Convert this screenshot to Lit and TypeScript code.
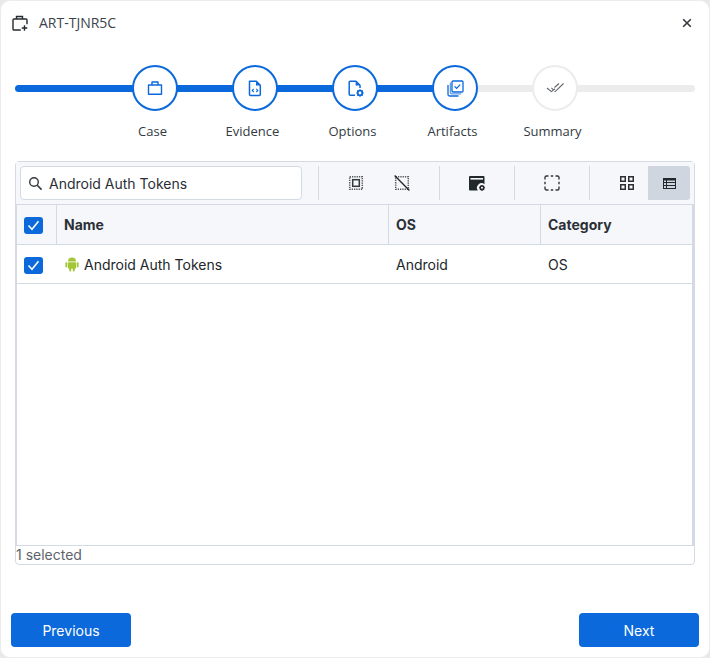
import { LitElement, html, css, svg, unsafeCSS } from 'lit';
import { customElement } from 'lit/decorators.js';

const BLUE = '#0b69dc';
const blue = unsafeCSS(BLUE);

const steps = [
  {
    label: 'Case',
    done: true,
    icon: svg`<path d="M2.5 6h13v9.3h-13z M6 6V3h6v3" fill="none" stroke="${BLUE}" stroke-width="1.4" stroke-linejoin="round"/>`,
  },
  {
    label: 'Evidence',
    done: true,
    icon: svg`<path d="M3.5 2.2h6.8l4 4V15.5a1 1 0 0 1-1 1H4.5a1 1 0 0 1-1-1z" fill="none" stroke="${BLUE}" stroke-width="1.5" stroke-linejoin="round"/><path d="M10 2.2v4.4h4.4z" fill="${BLUE}"/><path d="M7.7 9.8 6.2 11.4l1.5 1.6M10.3 9.8l1.5 1.6-1.5 1.6" fill="none" stroke="${BLUE}" stroke-width="1.1"/>`,
  },
  {
    label: 'Options',
    done: true,
    icon: svg`<path d="M9 16.2H4.2a1 1 0 0 1-1-1V3.2a1 1 0 0 1 1-1h5.8l4 4V9" fill="none" stroke="${BLUE}" stroke-width="1.5" stroke-linejoin="round"/><path d="M9.6 2.2v4.4h4.4z" fill="${BLUE}"/><circle cx="14" cy="14" r="2.3" fill="none" stroke="${BLUE}" stroke-width="1.8"/><path d="M14 10.3v1.3M14 16.4v1.3M10.3 14h1.3M16.4 14h1.3M11.4 11.4l.9.9M15.7 15.7l.9.9M16.6 11.4l-.9.9M12.3 15.7l-.9.9" stroke="${BLUE}" stroke-width="1.2"/>`,
  },
  {
    label: 'Artifacts',
    done: true,
    icon: svg`<path d="M2 6v9.5A1.5 1.5 0 0 0 3.5 17h9" fill="none" stroke="${BLUE}" stroke-width="1.3"/><path d="M4.4 3.5v10a1.3 1.3 0 0 0 1.3 1.3h9.5" fill="none" stroke="${BLUE}" stroke-width="1.3" opacity=".65"/><rect x="6" y="2" width="11" height="11" rx="1" fill="#fff" stroke="${BLUE}" stroke-width="1.3"/><path d="m8.6 7.4 2 2 3.6-3.8" fill="none" stroke="${BLUE}" stroke-width="1.3"/>`,
  },
  {
    label: 'Summary',
    done: false,
    icon: svg`<path d="m1 9 4.4 3.6L9 9.8M5.4 8.8l3.8 3.8L17.5 4.5M8.5 8.5l4.5-4" fill="none" stroke="#62676d" stroke-width="1.1"/>`,
  },
];

@customElement('app-root')
export class AppRoot extends LitElement {
  static styles = css`
    :host {
      display: block;
      width: 710px;
      height: 658px;
      font-family: 'Inter', 'Liberation Sans', sans-serif;
      color: #22262b;
      background: #e9e9e9;
    }
    * {
      box-sizing: border-box;
    }
    .dialog {
      position: relative;
      width: 710px;
      height: 658px;
      display: flex;
      flex-direction: column;
      background: #fff;
      border: 1px solid #ececec;
      border-radius: 10px;
    }
    .header {
      display: flex;
      align-items: center;
      height: 44px;
      padding: 0 16px 0 10px;
      flex: none;
    }
    .header svg {
      display: block;
    }
    .title {
      margin: 0 0 2px 10px;
      flex: 1;
      font: 14px 'Open Sans', sans-serif;
      color: #3c434b;
    }
    .stepper {
      position: relative;
      height: 116px;
      flex: none;
      display: flex;
      justify-content: center;
      padding-top: 20px;
    }
    .track {
      position: absolute;
      left: 14px;
      right: 14px;
      top: 40px;
      height: 7px;
      border-radius: 4px;
      background: linear-gradient(to right, ${blue} 0 440px, #ececec 440px);
    }
    .step {
      position: relative;
      width: 100px;
      display: flex;
      flex-direction: column;
      align-items: center;
    }
    .circle {
      width: 46px;
      height: 46px;
      border-radius: 50%;
      background: #fff;
      border: 2px solid ${blue};
      display: flex;
      align-items: center;
      justify-content: center;
    }
    .step.pending .circle {
      border-color: #ececec;
    }
    .label {
      margin: 10px 5px 0 0;
      font: 13px/20px 'Open Sans', sans-serif;
      color: #333a42;
    }
    .panel {
      margin: 0 14px;
      height: 404px;
      flex: none;
      border: 1px solid #d3dae3;
      border-radius: 4px;
      display: flex;
      flex-direction: column;
    }
    .toolbar {
      height: 42px;
      flex: none;
      background: #f5f7fa;
      padding: 4px;
      display: flex;
      align-items: stretch;
    }
    .search {
      width: 282px;
      background: #fff;
      border: 1px solid #d3dae3;
      border-radius: 4px;
      display: flex;
      align-items: center;
      gap: 6px;
      padding-left: 7px;
      font-size: 14px;
      color: #2a2f35;
    }
    .sep {
      width: 1px;
      margin-left: 16px;
      background: #d3dae3;
    }
    .tool {
      width: 42px;
      display: flex;
      align-items: center;
      justify-content: center;
    }
    .tool.active {
      background: #cfd6df;
      border-radius: 0 3px 3px 0;
    }
    .tools {
      margin-left: 16px;
      display: flex;
    }
    .tools.pair {
      gap: 4px;
    }
    .table {
      height: 342px;
      flex: none;
      border-top: 1px solid #d3dae3;
      border-left: 1px solid #d3dae3;
      border-right: 2px solid #d3dae3;
      border-bottom: 1px solid #d3dae3;
      background: #fff;
      font-size: 14px;
    }
    .row {
      display: grid;
      grid-template-columns: 40px 332px 152px 151px;
      border-bottom: 1px solid #d3dae3;
      height: 39px;
      align-items: center;
    }
    .row.head {
      height: 40px;
      background: #f5f7fa;
      font-weight: 700;
      font-size: 14px;
      color: #2b3036;
      align-items: stretch;
    }
    .cell {
      padding-left: 7px;
      display: flex;
      align-items: center;
      gap: 4px;
      height: 100%;
    }
    .head .cell {
      border-right: 1px solid #d3dae3;
    }
    .head .cell:last-child {
      border-right: none;
    }
    .box {
      width: 19px;
      height: 17px;
      margin-top: 2px;
      border-radius: 3px;
      background: ${blue};
      display: flex;
      align-items: center;
      justify-content: center;
    }
    .status {
      font-size: 14px;
      line-height: 18px;
      color: #5d646c;
    }
    .footer {
      margin-top: auto;
      padding: 0 10px 10px;
      display: flex;
      justify-content: space-between;
    }
    button {
      width: 120px;
      height: 34px;
      border: none;
      border-radius: 4px;
      background: ${blue};
      color: #fff;
      font: 14px 'Inter', sans-serif;
    }
  `;

  private checkbox() {
    return html`<span class="box">
      <svg width="13" height="11" viewBox="0 0 13 11"><path d="m1.5 5.5 3.5 3.8 6.5-8" fill="none" stroke="#fff" stroke-width="1.5"/></svg>
    </span>`;
  }

  render() {
    return html`
      <div class="dialog">
        <div class="header">
          <svg width="18" height="18" viewBox="0 0 18 18">
            <path d="M9.8 16H3a1 1 0 0 1-1-1V6a1 1 0 0 1 1-1h12a1 1 0 0 1 1 1v4.2M5.5 5V2.5h6V5" fill="none" stroke="#262b30" stroke-width="1.4"/>
            <path d="M13.5 11.2v5.6M10.7 14h5.6" stroke="#262b30" stroke-width="1.4"/>
          </svg>
          <span class="title">ART-TJNR5C</span>
          <svg width="12" height="12" viewBox="0 0 12 12"><path d="m2.2 2.2 7.6 7.6M9.8 2.2l-7.6 7.6" stroke="#33393f" stroke-width="1.6"/></svg>
        </div>
        <div class="stepper">
          <div class="track"></div>
          ${steps.map(
            (s) => html`<div class="step ${s.done ? '' : 'pending'}">
              <div class="circle"><svg width="18" height="18" viewBox="0 0 18 18">${s.icon}</svg></div>
              <span class="label">${s.label}</span>
            </div>`
          )}
        </div>
        <div class="panel">
          <div class="toolbar">
            <div class="search">
              <svg width="15" height="15" viewBox="0 0 15 15"><circle cx="6" cy="6" r="4.3" fill="none" stroke="#33393f" stroke-width="1.4"/><path d="m9.2 9.2 4.4 4.4" stroke="#33393f" stroke-width="1.6"/></svg>
              Android Auth Tokens
            </div>
            <div class="sep"></div>
            <div class="tools pair">
              <div class="tool">
                <svg width="16" height="16" viewBox="0 0 16 16"><rect x="1.7" y="1.7" width="12.6" height="12.6" fill="none" stroke="#50565c" stroke-width="1.5" stroke-dasharray="1.3 1"/><rect x="4.7" y="4.7" width="6.6" height="6.6" fill="none" stroke="#33393f" stroke-width="1.5"/></svg>
              </div>
              <div class="tool">
                <svg width="16" height="16" viewBox="0 0 16 16"><rect x="1.7" y="1.7" width="12.6" height="12.6" fill="none" stroke="#50565c" stroke-width="1.5" stroke-dasharray="1.3 1"/><path d="m.6.6 14.8 14.8" stroke="#262b30" stroke-width="1.4"/></svg>
              </div>
            </div>
            <div class="sep"></div>
            <div class="tools">
              <div class="tool">
                <svg width="18" height="17" viewBox="0 0 18 17"><path d="M1 2a1 1 0 0 1 1-1h13.5a1 1 0 0 1 1 1v7.2a4.6 4.6 0 0 0-6.6 6.3H2a1 1 0 0 1-1-1z" fill="#23282d"/><rect x="2.5" y="3" width="12.5" height="1.6" fill="#f5f7fa"/><circle cx="14" cy="12.8" r="1.8" fill="none" stroke="#23282d" stroke-width="1.5"/><path d="M14 9.9v1.1M14 14.6v1.3M11.1 12.8h1.1M15.8 12.8h1.1M12 10.8l.7.7M15.3 14.1l.7.7M16 10.8l-.7.7M12.7 14.1l-.7.7" stroke="#23282d" stroke-width="1.1"/></svg>
              </div>
            </div>
            <div class="sep"></div>
            <div class="tools">
              <div class="tool">
                <svg width="16" height="16" viewBox="0 0 16 16"><path d="M1 4.5v-2A1.5 1.5 0 0 1 2.5 1h2M6.8 1h2.4M11.5 1h2A1.5 1.5 0 0 1 15 2.5v2M15 6.8v2.4M15 11.5v2a1.5 1.5 0 0 1-1.5 1.5h-2M9.2 15H6.8M4.5 15h-2A1.5 1.5 0 0 1 1 13.5v-2M1 9.2V6.8" fill="none" stroke="#33393f" stroke-width="1.4"/></svg>
              </div>
            </div>
            <div class="sep"></div>
            <div class="tools">
              <div class="tool">
                <svg width="14" height="14" viewBox="0 0 14 14"><g fill="none" stroke="#2b3036" stroke-width="1.5"><rect x=".75" y=".75" width="4.5" height="4.5"/><rect x="8.75" y=".75" width="4.5" height="4.5"/><rect x=".75" y="8.75" width="4.5" height="4.5"/><rect x="8.75" y="8.75" width="4.5" height="4.5"/></g></svg>
              </div>
              <div class="tool active">
                <svg width="13" height="11" viewBox="0 0 13 11"><rect x=".5" y=".5" width="12" height="10" fill="none" stroke="#23282d"/><path d="M0 1.5h13" stroke="#23282d" stroke-width="2"/><path d="M.5 4.5h12M.5 7.5h12M3.5 .5v10" stroke="#23282d"/></svg>
              </div>
            </div>
          </div>
          <div class="table">
            <div class="row head">
              <div class="cell">${this.checkbox()}</div>
              <div class="cell">Name</div>
              <div class="cell">OS</div>
              <div class="cell">Category</div>
            </div>
            <div class="row">
              <div class="cell">${this.checkbox()}</div>
              <div class="cell">
                <svg width="16" height="16" viewBox="0 0 16 16" fill="#a4c639"><path d="M4 5.6a4 4 0 0 1 8 0z"/><rect x="4" y="6.2" width="8" height="6.6" rx=".8"/><rect x="1.4" y="6.2" width="2" height="5.4" rx="1"/><rect x="12.6" y="6.2" width="2" height="5.4" rx="1"/><rect x="5.2" y="11" width="2" height="4.4" rx="1"/><rect x="8.8" y="11" width="2" height="4.4" rx="1"/></svg>
                Android Auth Tokens
              </div>
              <div class="cell">Android</div>
              <div class="cell">OS</div>
            </div>
          </div>
          <div class="status">1 selected</div>
        </div>
        <div class="footer">
          <button>Previous</button>
          <button>Next</button>
        </div>
      </div>
    `;
  }
}
